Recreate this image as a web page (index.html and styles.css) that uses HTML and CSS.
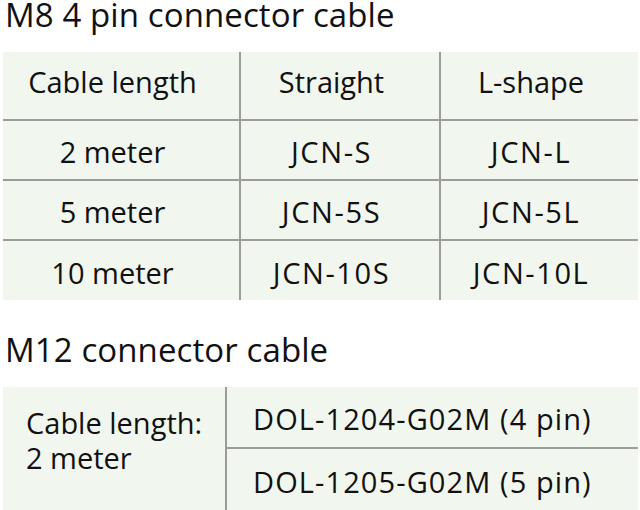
FILE: index.html
```html
<!DOCTYPE html>
<html lang="en">
<head>
<meta charset="utf-8">
<title>Connector cables</title>
<link rel="stylesheet" href="styles.css">
</head>
<body>
<div class="page">
  <h2 class="title">M8 4 pin connector cable</h2>
  <div class="grid m8">
    <div class="cell head">Cable length</div>
    <div class="cell head">Straight</div>
    <div class="cell head">L-shape</div>
    <div class="cell">2 meter</div>
    <div class="cell code">JCN-S</div>
    <div class="cell code">JCN-L</div>
    <div class="cell">5 meter</div>
    <div class="cell code">JCN-5S</div>
    <div class="cell code">JCN-5L</div>
    <div class="cell">10 meter</div>
    <div class="cell code">JCN-10S</div>
    <div class="cell code">JCN-10L</div>
  </div>
  <h2 class="title second">M12 connector cable</h2>
  <div class="grid m12">
    <div class="cell label">Cable length:<br>2 meter</div>
    <div class="cell part">DOL-1204-G02M (4 pin)</div>
    <div class="cell part">DOL-1205-G02M (5 pin)</div>
  </div>
</div>
</body>
</html>
```
FILE: styles.css
```css
html, body {
  margin: 0;
  padding: 0;
  background: #ffffff;
}
.page {
  width: 635px;
  padding-left: 3px;
  font-family: "Open Sans", "Noto Sans", sans-serif;
  color: #111111;
}
.title {
  margin: 0 0 22px 2px;
  font-size: 33px;
  font-weight: 400;
  line-height: 30px;
  height: 30px;
  letter-spacing: 0.1px;
}
.title.second {
  margin-top: 35px;
}
.grid {
  display: grid;
  gap: 2px;
  background: #9c9c9c;
}
.m8 {
  grid-template-columns: 236px 198px 197px;
  grid-template-rows: 67px 58px 58px 59px;
}
.m12 {
  grid-template-columns: 222px 411px;
  grid-template-rows: 60px 62px;
}
.cell {
  background: #f1f6ee;
  font-size: 29px;
  line-height: 36px;
  display: flex;
  align-items: center;
  justify-content: center;
}
.m8 .cell {
  padding-top: 4px;
  padding-right: 17px;
}
.m8 .cell.head {
  padding-top: 0;
  padding-bottom: 8px;
}
.m8 .code {
  letter-spacing: 1.6px;
}
.label {
  grid-row: 1 / span 2;
  display: block;
  padding: 18px 0 0 23px;
  line-height: 35px;
}
.part {
  justify-content: flex-start;
  padding: 4px 0 0 26px;
  letter-spacing: 1.1px;
}
```
